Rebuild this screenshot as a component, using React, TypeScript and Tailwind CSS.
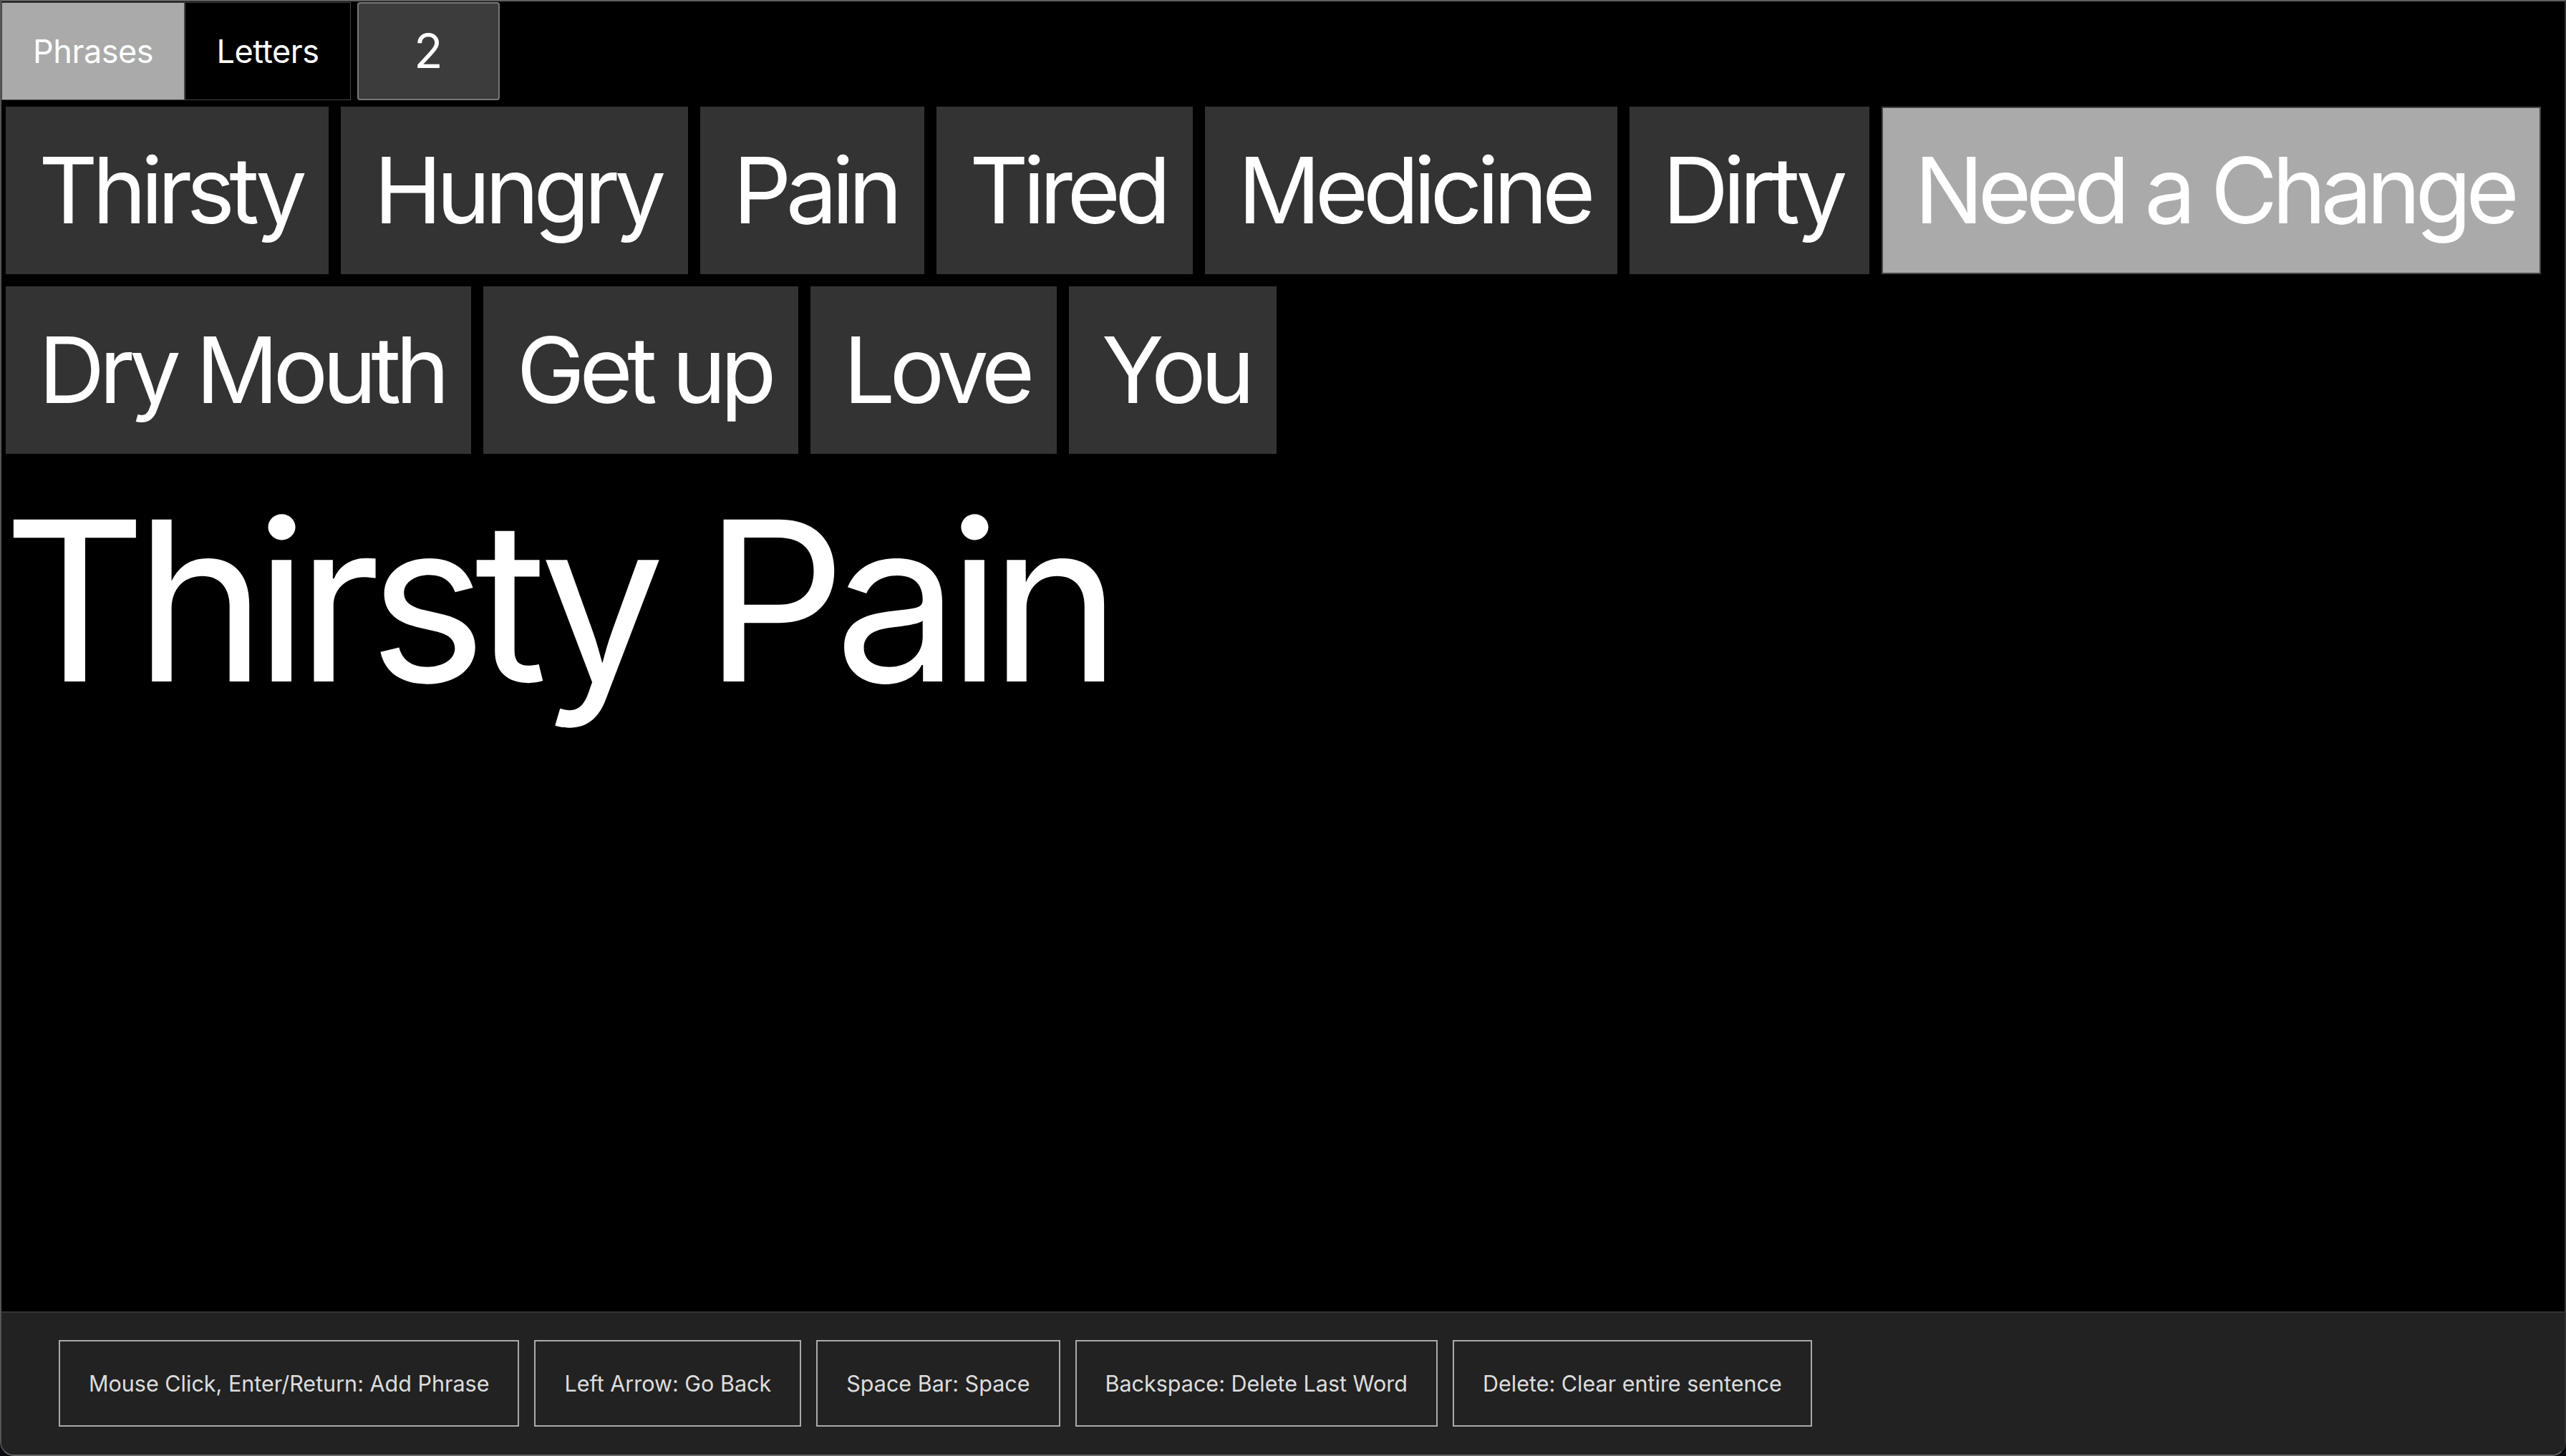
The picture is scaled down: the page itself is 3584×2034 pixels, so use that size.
import React from "react";

const phrases = [
  "Thirsty",
  "Hungry",
  "Pain",
  "Tired",
  "Medicine",
  "Dirty",
  "Need a Change",
  "Dry Mouth",
  "Get up",
  "Love",
  "You",
];

const hints = [
  "Mouse Click, Enter/Return: Add Phrase",
  "Left Arrow: Go Back",
  "Space Bar: Space",
  "Backspace: Delete Last Word",
  "Delete: Clear entire sentence",
];

export default function App() {
  return (
    <div className="h-screen w-full bg-[#0b0b12]" style={{ fontFamily: "Inter, 'Noto Sans', sans-serif" }}>
      <div className="flex h-full w-full flex-col overflow-hidden rounded-b-[20px] border-2 border-t-[#5f5f5f] border-l-[#555] border-r-[#333] border-b-[#666] bg-black">
        <div className="flex items-stretch pt-px">
          <button className="flex h-[137px] w-[256px] items-center justify-center border border-[#444] bg-[#aaaaaa] text-[45px] text-white tracking-[-0.5px]">
            Phrases
          </button>
          <button className="flex h-[137px] w-[232px] items-center justify-center border border-[#444] bg-black text-[45px] text-white tracking-[-0.5px]">
            Letters
          </button>
          <button className="ml-[9px] flex h-[137px] w-[199px] items-center justify-center rounded-[4px] border-2 border-[#777] bg-[#3c3c3c] text-[66px] text-white">
            2
          </button>
        </div>
        <div className="flex flex-wrap gap-x-[17px] gap-y-[17px] pl-[6px] pt-[9px]">
          {phrases.map((p) => (
            <button
              key={p}
              className={
                p === "Need a Change"
                  ? "flex h-[234px] items-center whitespace-nowrap border-2 border-[#444] bg-[#aaaaaa] pl-[44px] pr-[36px] text-[128px] tracking-[-7.75px] text-white"
                  : "flex h-[234px] items-center whitespace-nowrap border-2 border-[#333] bg-[#333333] pl-[44px] pr-[36px] text-[128px] tracking-[-7.75px] text-white"
              }
            >
              {p}
            </button>
          ))}
        </div>
        <div className="mt-[17px] pl-[2px] text-[311px] leading-[1.21] tracking-[-16.5px] text-white">
          Thirsty Pain
        </div>
        <div className="flex-1" />
        <div className="flex gap-[21px] border-t-2 border-[#333] bg-[#222222] px-[80px] pb-[39px] pt-[38px]">
          {hints.map((h) => (
            <div
              key={h}
              className="flex h-[121px] items-center border-2 border-[#aaaaaa] px-[40px] text-[30.5px] text-[#dddddd]"
            >
              {h}
            </div>
          ))}
        </div>
      </div>
    </div>
  );
}
